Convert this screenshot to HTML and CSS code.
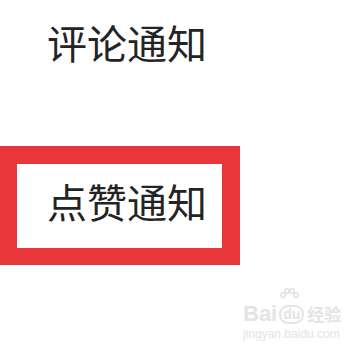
FILE: index.html
```html
<!DOCTYPE html>
<html lang="zh-CN">
<head>
<meta charset="utf-8">
<link rel="stylesheet" href="styles.css">
</head>
<body>
<div class="page">
  <div class="item first">评论通知</div>
  <div class="highlight">
    <div class="item inner">点赞通知</div>
  </div>
  <div class="watermark">
    <svg class="wm-paw" width="20" height="16" viewBox="0 0 20 16"><g fill="none" stroke="#e2e2e2" stroke-width="1.5"><ellipse cx="4" cy="7" rx="2" ry="2.5"/><ellipse cx="8" cy="3" rx="2" ry="2.5"/><ellipse cx="13" cy="3" rx="2" ry="2.5"/><ellipse cx="17" cy="7" rx="2" ry="2.5"/></g></svg>
    <div class="wm-logo"><span class="wm-bai">Bai</span><span class="wm-du">du</span><span class="wm-jy">经验</span></div>
    <div class="wm-url">jingyan.baidu.com</div>
  </div>
</div>
</body>
</html>
```
FILE: styles.css
```css
html, body {
  margin: 0;
  padding: 0;
  background: #ffffff;
}
.page {
  position: relative;
  width: 360px;
  height: 344px;
  overflow: hidden;
  font-family: "Noto Sans CJK SC", "Noto Sans", sans-serif;
}
.item {
  font-size: 40px;
  line-height: 40px;
  color: #242424;
  white-space: nowrap;
}
.first {
  padding: 22px 0 0 47px;
}
.highlight {
  margin-top: 84px;
  width: 205px;
  height: 84px;
  border: 18px solid #ea363a;
  border-left-width: 17px;
  border-bottom-width: 17px;
}
.inner {
  padding: 17px 0 0 30px;
}
.watermark {
  position: absolute;
  left: 243px;
  top: 288px;
  width: 100px;
  color: #e4e4e4;
  font-family: "Liberation Sans", sans-serif;
}
.wm-paw {
  display: block;
  margin-left: 36px;
}
.wm-logo {
  font-size: 22px;
  font-weight: bold;
  line-height: 20px;
  display: flex;
  align-items: center;
}
.wm-du {
  font-size: 14px;
  border: 2px solid #e4e4e4;
  border-radius: 9px;
  padding: 0 2px;
  line-height: 15px;
  margin: 0 3px 0 2px;
}
.wm-jy {
  font-family: "Noto Sans CJK SC", sans-serif;
  font-size: 17px;
}
.wm-url {
  font-size: 12px;
  line-height: 16px;
  margin-top: 2px;
}
```
